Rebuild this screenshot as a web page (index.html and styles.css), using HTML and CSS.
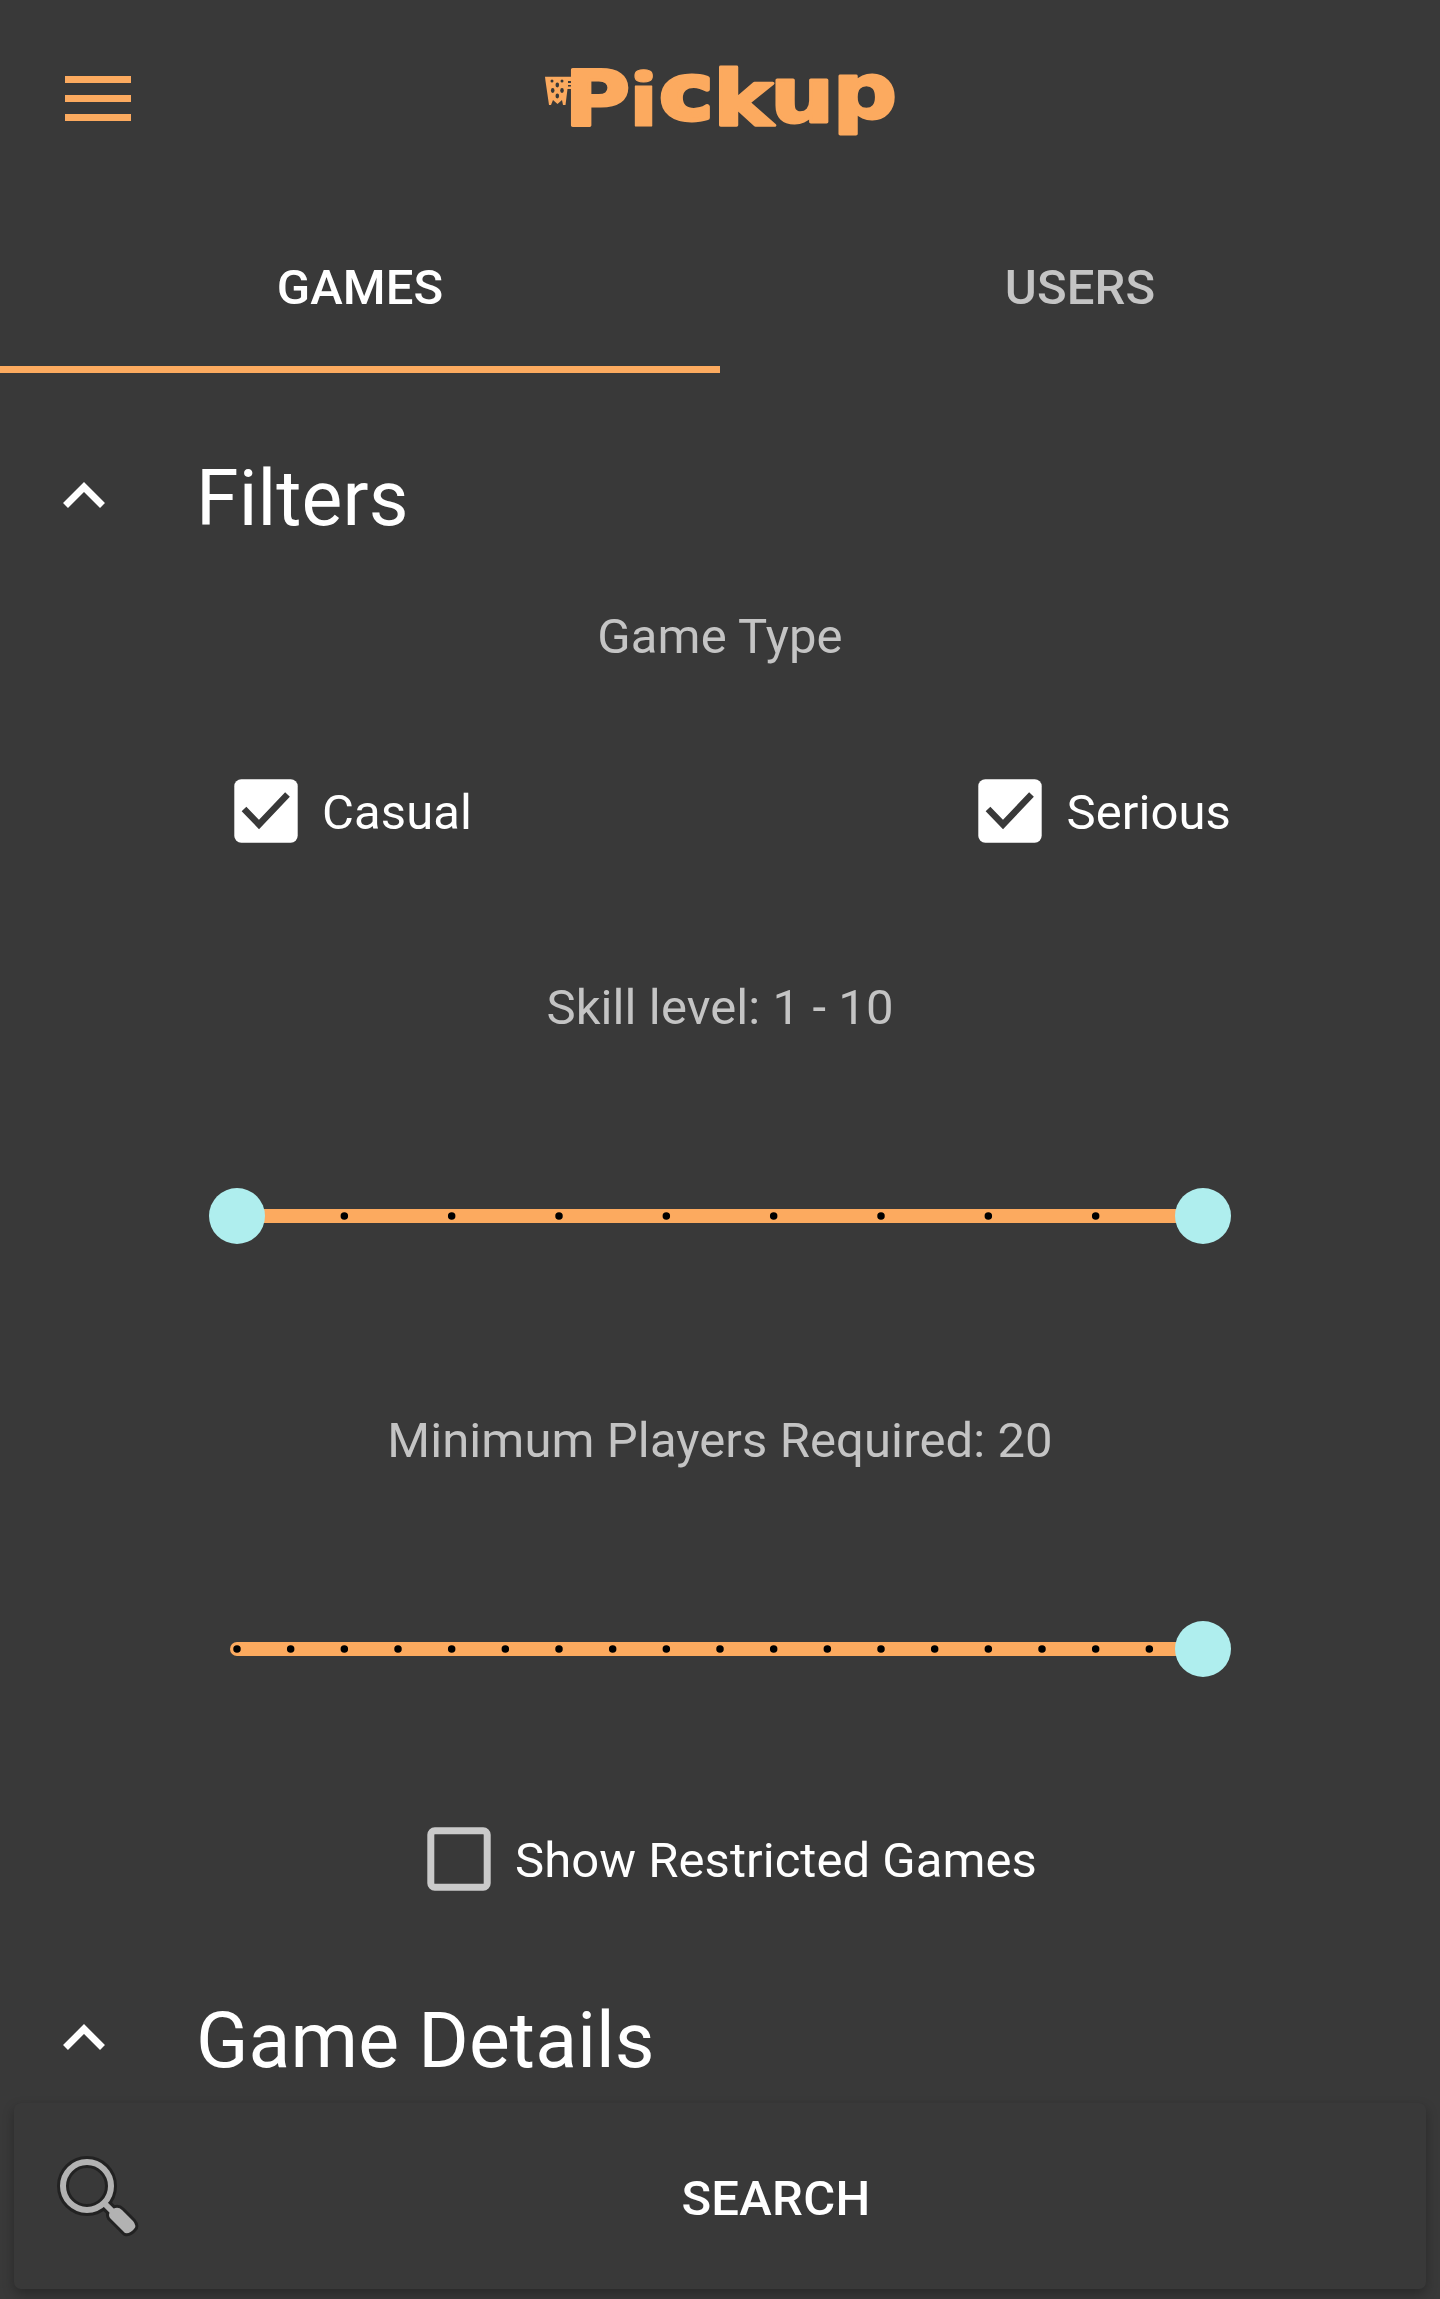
FILE: index.html
```html
<!DOCTYPE html>
<html lang="en">
<head>
<meta charset="utf-8">
<title>Pickup</title>
<link rel="stylesheet" href="styles.css">
</head>
<body>
<header class="header">
  <button class="menu" aria-label="Menu"><span class="bar"></span><span class="bar"></span><span class="bar"></span></button>
  <svg class="logo" width="354" height="90" viewBox="-1 0 354 90">
    <path class="net" d="M1 12.700H27V17H24V19H27V21H24V22.500H27V25H23.500L21.500 41H19L18 36L13.500 40L9 36L7 41H5L1.500 17Z"/>
    <g class="holes"><circle cx="8" cy="17" r="1.500"/><circle cx="18" cy="17" r="1.500"/><ellipse cx="13.300" cy="21" rx="1.800" ry="2.400"/><ellipse cx="8.700" cy="26.500" rx="1.800" ry="2.400"/><ellipse cx="18" cy="26.500" rx="1.800" ry="2.400"/><ellipse cx="13.300" cy="32" rx="1.800" ry="2.400"/></g>
    <text class="logo-text" transform="scale(1.18 1)" x="17.4 72.6 98.2 143.4 191.8 244.8" y="61 61.5 54.5 61 58 54">P<tspan class="logo-i">i</tspan><tspan class="logo-c">c</tspan>kup</text>
  </svg>
</header>
<nav class="tabs">
  <a class="tab active">GAMES</a>
  <a class="tab">USERS</a>
</nav>
<main class="content">
  <h2 class="section">
    <svg class="chevron" width="42" height="26" viewBox="0 0 42 26"><path d="M2.5 23.5L21 5L39.5 23.5"/></svg>
    Filters
  </h2>
  <p class="label">Game Type</p>
  <div class="types">
    <label class="check">
      <svg width="64" height="64" viewBox="0 0 64 64"><rect class="box-on" x=".3" y=".3" width="63.400" height="63.400" rx="7"/><path class="tick" d="M10 30L25 45.500L53.500 15.500"/></svg>
      <span class="check-text">Casual</span>
    </label>
    <label class="check">
      <svg width="64" height="64" viewBox="0 0 64 64"><rect class="box-on" x=".3" y=".3" width="63.400" height="63.400" rx="7"/><path class="tick" d="M10 30L25 45.500L53.500 15.500"/></svg>
      <span class="check-text">Serious</span>
    </label>
  </div>
  <p class="label skill">Skill level: 1 - 10</p>
  <svg class="slider" width="1022" height="56" viewBox="0 0 1022 56">
    <path class="track" d="M28 28H994"/>
    <path class="dots" d="M135.330 28h0M242.670 28h0M350 28h0M457.330 28h0M564.670 28h0M672 28h0M779.330 28h0M886.670 28h0"/>
    <circle class="thumb" cx="28" cy="28" r="28"/><circle class="thumb" cx="994" cy="28" r="28"/>
  </svg>
  <p class="label players">Minimum Players Required: 20</p>
  <svg class="slider" width="1022" height="56" viewBox="0 0 1022 56">
    <path class="track" d="M28 28H994"/>
    <path class="dots" d="M28 28h0M81.670 28h0M135.330 28h0M189 28h0M242.670 28h0M296.330 28h0M350 28h0M403.670 28h0M457.330 28h0M511 28h0M564.670 28h0M618.330 28h0M672 28h0M725.670 28h0M779.330 28h0M833 28h0M886.670 28h0M940.330 28h0"/>
    <circle class="thumb" cx="994" cy="28" r="28"/>
  </svg>
  <label class="check restricted">
    <svg width="64" height="64" viewBox="0 0 64 64"><rect class="box-off" x="3.800" y="3.800" width="56.400" height="56.400" rx="4"/></svg>
    <span class="check-text">Show Restricted Games</span>
  </label>
  <h2 class="section details">
    <svg class="chevron" width="42" height="26" viewBox="0 0 42 26"><path d="M2.5 23.5L21 5L39.5 23.5"/></svg>
    Game Details
  </h2>
</main>
<button class="search">
  <svg class="glass" width="88" height="88" viewBox="0 0 88 88">
    <g class="halo"><circle cx="33" cy="33" r="24"/><path d="M50 50L60 60"/><path class="grip" d="M59 56Q64 53 68 57L79 68Q83 73 80 76Q76 81 71 80L56 65Q54 62 56 59Z"/></g>
    <g class="lens"><circle cx="33" cy="33" r="24"/><path d="M50 50L60 60"/></g>
    <path class="handle" d="M59 56Q64 53 68 57L79 68Q83 73 80 76Q76 81 71 80L56 65Q54 62 56 59Z"/>
  </svg>
  <span class="search-text">SEARCH</span>
</button>
</body>
</html>
```
FILE: styles.css
```css
* { box-sizing: border-box; }
body {
  margin: 0;
  height: 2299px;
  overflow: hidden;
  display: flex;
  flex-direction: column;
  background: #393939;
  color: #fff;
  font: 49px/58px Roboto, sans-serif;
  letter-spacing: .1px;
}
button { border: 0; padding: 0; background: none; color: inherit; font: inherit; }
.header {
  height: 205px;
  padding: 64px 65px 0;
  display: grid;
  grid-template-columns: 66px 1fr 66px;
  align-items: start;
}
.menu { display: flex; flex-direction: column; gap: 12px; padding-top: 12px; }
.bar { width: 66px; height: 7px; background: #fcaa5f; }
.logo { justify-self: center; overflow: visible; }
.net { fill: #fcaa5f; }
.holes { fill: #393939; }
.logo-text {
  font: bold 76px "DejaVu Sans", sans-serif;
  letter-spacing: 0;
  fill: #fcaa5f;
  stroke: #fcaa5f;
  stroke-width: 3;
  stroke-linejoin: round;
}
.logo-i { font: 800 72px "Open Sans", sans-serif; stroke-width: 1; }
.logo-c { stroke-width: 5; }
.tabs { display: flex; height: 168px; font-weight: 500; }
.tab {
  flex: 1;
  display: flex;
  align-items: center;
  justify-content: center;
  padding-top: 4px;
  border-bottom: 7px solid transparent;
  color: #c4c4c4;
}
.tab.active { color: #fff; border-color: #fcaa5f; }
.content { display: flex; flex-direction: column; height: 1730px; }
.section {
  display: flex;
  align-items: center;
  gap: 91px;
  height: 90px;
  margin: 81px 0 0;
  padding-left: 63px;
  font-size: 77px;
  font-weight: 400;
}
.chevron { margin-bottom: 9px; fill: none; stroke: #fff; stroke-width: 7; }
.label { margin: 64px 0 0; text-align: center; color: #c4c4c4; }
.types { display: flex; justify-content: space-between; margin-top: 113px; padding: 0 209px 0 234px; }
.check { display: flex; align-items: center; gap: 24px; height: 64px; }
.check-text { padding-top: 4px; }
.box-on { fill: #fff; }
.box-off { fill: none; stroke: #cacaca; stroke-width: 7; }
.tick { fill: none; stroke: #393939; stroke-width: 6.500; }
.skill { margin-top: 136px; }
.slider { align-self: center; margin-top: 151px; }
.track { stroke: #fcaa5f; stroke-width: 14; stroke-linecap: round; }
.dots { stroke: #000; stroke-width: 7.500; stroke-linecap: round; }
.thumb { fill: #afeeee; }
.players { margin-top: 168px; }
.restricted { align-self: center; margin-top: 150px; padding-left: 24px; letter-spacing: .05px; }
.details { margin-top: 105px; }
.search {
  display: grid;
  grid-template-columns: 88px 1fr;
  align-items: center;
  height: 186px;
  margin: 0 14px;
  padding: 0 37px 0 40px;
  border-radius: 7px;
  background: #393939;
  box-shadow: 0 5px 12px rgba(0, 0, 0, .28);
  font-weight: 500;
}
.glass { margin-top: 2px; fill: none; }
.halo { stroke: #222; stroke-width: 12; }
.grip { stroke-width: 6; stroke-linejoin: round; }
.lens { stroke: #b2b2b2; stroke-width: 6; }
.handle { fill: #b2b2b2; }
.search-text { padding: 5px 0 0 21px; letter-spacing: .3px; }
```
